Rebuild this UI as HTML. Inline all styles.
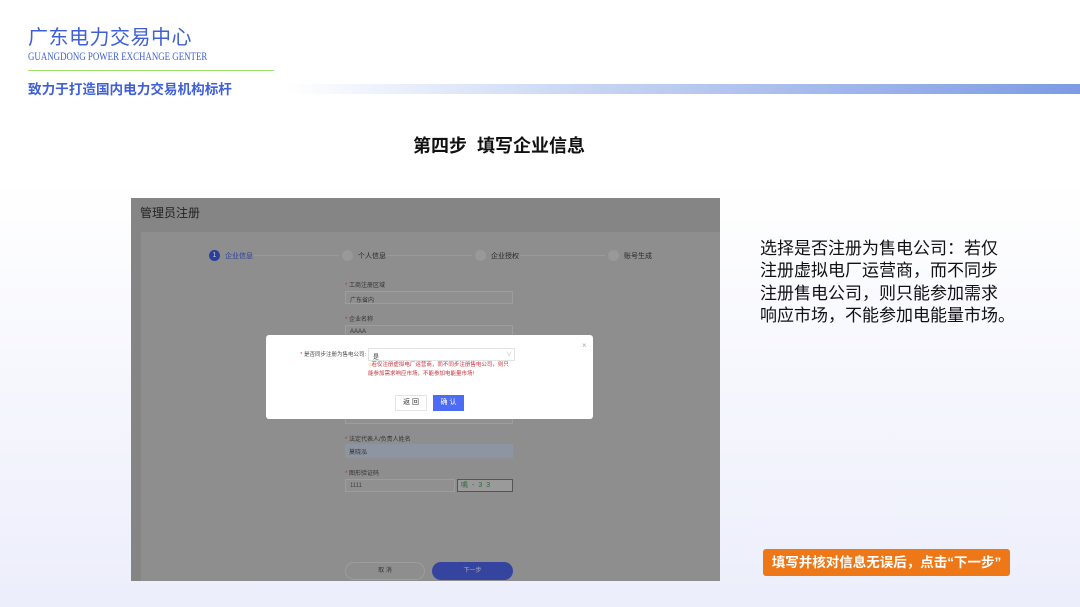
<!DOCTYPE html>
<html><head><meta charset="utf-8"><style>
*{margin:0;padding:0;box-sizing:border-box}
body{width:1080px;height:607px;position:relative;overflow:hidden;font-family:"Liberation Sans","Noto Sans CJK SC",sans-serif;background:linear-gradient(#fff 0,#fff 180px,#eceefb 600px)}
.a{position:absolute}
.t{white-space:nowrap}
</style></head><body>
<div class="a t" style="left:28px;top:21px;font-size:20px;color:#3f5fd9;letter-spacing:.5px;font-family:'Noto Sans CJK SC',sans-serif;font-weight:400">广东电力交易中心</div>
<div class="a t" style="left:28px;top:49px;font-size:12px;color:#3f5fd9;font-family:'Liberation Serif',serif;transform:scaleX(.74);transform-origin:left">GUANGDONG POWER EXCHANGE GENTER</div>
<div class="a" style="left:28px;top:70px;width:246px;height:1px;background:#9be36a"></div>
<div class="a t" style="left:28px;top:78px;font-size:13.6px;color:#3f5fd9;font-weight:bold">致力于打造国内电力交易机构标杆</div>
<div class="a" style="left:285px;top:84px;width:795px;height:10px;background:linear-gradient(90deg,rgba(255,255,255,0),#c5d3f3 40%,#7d9be3)"></div>
<div class="a t" style="left:413px;top:132px;font-size:18px;font-weight:bold;color:#111">第四步&nbsp;&nbsp;填写企业信息</div>

<div class="a" style="left:131px;top:198px;width:589px;height:383px;background:#858585;overflow:hidden">
 <div class="a t" style="left:9px;top:6px;font-size:12px;color:#222">管理员注册</div>
 <div class="a" style="left:10px;top:34px;width:579px;height:349px;background:#8e8e8e"></div>
 <div class="a" style="left:78px;top:52px;width:11px;height:11px;border-radius:50%;background:#2c3f98;color:#ccc;font-size:7px;text-align:center;line-height:11px">1</div>
 <div class="a t" style="left:94px;top:53px;font-size:7px;color:#2c3f98">企业信息</div>
 <div class="a" style="left:123px;top:57px;width:85px;height:1px;background:#9a9a9a"></div>
 <div class="a" style="left:211px;top:52px;width:11px;height:11px;border-radius:50%;background:#999"></div>
 <div class="a t" style="left:227px;top:53px;font-size:7px;color:#2a2a2a">个人信息</div>
 <div class="a" style="left:256px;top:57px;width:85px;height:1px;background:#9a9a9a"></div>
 <div class="a" style="left:344px;top:52px;width:11px;height:11px;border-radius:50%;background:#999"></div>
 <div class="a t" style="left:360px;top:53px;font-size:7px;color:#2a2a2a">企业授权</div>
 <div class="a" style="left:389px;top:57px;width:85px;height:1px;background:#9a9a9a"></div>
 <div class="a" style="left:477px;top:52px;width:11px;height:11px;border-radius:50%;background:#999"></div>
 <div class="a t" style="left:493px;top:53px;font-size:7px;color:#2a2a2a">账号生成</div>
 <div class="a t" style="left:214px;top:82px;font-size:6px;color:#333"><span style="color:#a33">*</span> 工商注册区域</div>
 <div class="a" style="left:214px;top:93px;width:168px;height:13px;border:1px solid #9d9d9d;background:#909090;font-size:6px;color:#333;padding:3px 4px">广东省内</div>
 <div class="a t" style="left:214px;top:116px;font-size:6px;color:#333"><span style="color:#a33">*</span> 企业名称</div>
 <div class="a" style="left:214px;top:127px;width:168px;height:13px;border:1px solid #9d9d9d;background:#909090;font-size:6px;color:#333;padding:3px 4px">AAAA</div>
 <div class="a" style="left:214px;top:213px;width:168px;height:13px;border:1px solid #9d9d9d;background:#909090"></div>
 <div class="a t" style="left:214px;top:236px;font-size:6px;color:#333"><span style="color:#a33">*</span> 法定代表人/负责人姓名</div>
 <div class="a" style="left:214px;top:246px;width:168px;height:14px;background:#8e95a2;font-size:6px;color:#333;padding:3px 4px">莫晓泓</div>
 <div class="a t" style="left:214px;top:270px;font-size:6px;color:#333"><span style="color:#a33">*</span> 图形验证码</div>
 <div class="a" style="left:214px;top:281px;width:110px;height:13px;border:1px solid #9d9d9d;background:#909090;font-size:6px;color:#444;padding:3px 4px">1111</div>
 <div class="a" style="left:326px;top:281px;width:56px;height:13px;border:1px solid #555;background:#9a9a9a;font-size:7px;color:#2a6a3a;letter-spacing:4px;padding-left:3px;line-height:11px">鳴-33</div>
 <div class="a" style="left:214px;top:364px;width:80px;height:18px;border:1px solid #9d9d9d;border-radius:9px;background:#8e8e8e;font-size:6px;color:#333;text-align:center;line-height:16px">取 消</div>
 <div class="a" style="left:301px;top:364px;width:81px;height:18px;border-radius:9px;background:#34449f;font-size:6px;color:#aab;text-align:center;line-height:18px">下一步</div>
</div>
<div class="a" style="left:266px;top:335px;width:327px;height:84px;background:#fff;border-radius:3px">
 <div class="a t" style="right:227px;top:15px;font-size:5.5px;color:#444"><span style="color:#c33">*</span> 是否同步注册为售电公司:</div>
 <div class="a" style="left:102px;top:13px;width:147px;height:13px;border:1px solid #e3e3e3;font-size:6px;color:#333;padding:3px 4px">是</div>
 <div class="a" style="left:240px;top:14px;font-size:6px;color:#bbb">∨</div>
 <div class="a t" style="left:102px;top:26px;font-size:5.5px;color:#c8303a;line-height:9px"><span style="color:#e6c020">○</span>若仅注册虚拟电厂运营商，而不同步注册售电公司，则只<br>能参加需求响应市场，不能参加电能量市场!</div>
 <div class="a" style="left:316px;top:6px;font-size:8px;color:#aaa">×</div>
 <div class="a" style="left:129px;top:60px;width:32px;height:16px;border:1px solid #e4e4e4;font-size:7px;color:#333;text-align:center;line-height:14px">返 回</div>
 <div class="a" style="left:167px;top:60px;width:31px;height:16px;background:#4d6cf5;font-size:7px;color:#fff;text-align:center;line-height:16px">确 认</div>
</div>

<div class="a" style="left:760px;top:236px;font-size:17px;line-height:22.3px;color:#111;font-family:'WenQuanYi Zen Hei','Noto Sans CJK SC',sans-serif">选择是否注册为售电公司：若仅<br>注册虚拟电厂运营商，而不同步<br>注册售电公司，则只能参加需求<br>响应市场，不能参加电能量市场。</div>
<div class="a t" style="left:763px;top:549px;width:247px;height:27px;border-radius:3px;background:#ee7718;color:#fff;font-size:13.5px;font-weight:bold;text-align:center;line-height:27px">填写并核对信息无误后，点击“下一步”</div>
</body></html>
